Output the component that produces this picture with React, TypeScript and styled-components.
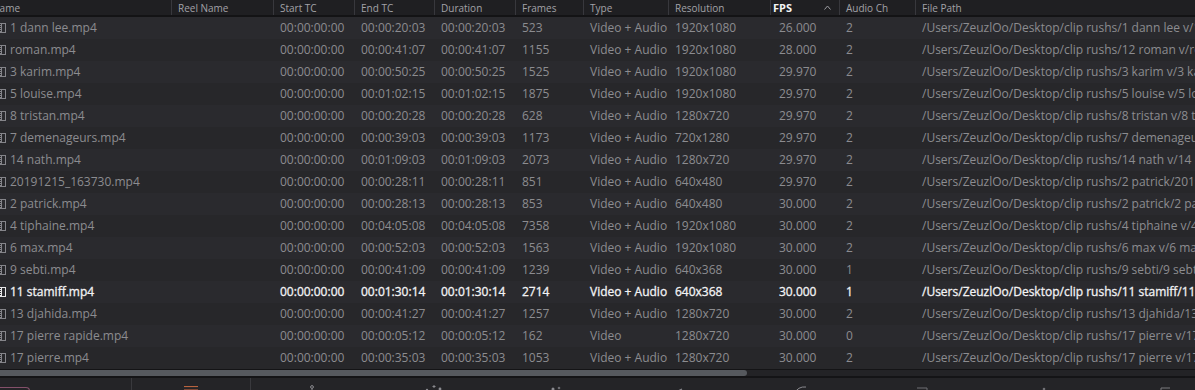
import React from 'react'
import styled, { createGlobalStyle } from 'styled-components'

const GlobalStyle = createGlobalStyle`
  html, body {
    margin: 0;
    padding: 0;
    background: #28282c;
    overflow: hidden;
  }
  body {
    font-family: "Open Sans", "Liberation Sans", sans-serif;
  }
`

// widths of the list columns, Name first, File Path last
const COLUMNS = '206px 102px 81px 80px 81px 68px 85px 102px 69px 76px 440px'

const Page = styled.div`
  width: 1195px;
  height: 390px;
  display: flex;
  flex-direction: column;
  overflow: hidden;
`

const TableViewport = styled.div`
  overflow: hidden;
  flex: none;
`

// the list is scrolled sideways, so the start of the Name column is out of view
const Table = styled.div`
  margin-left: -35px;
  width: max-content;
`

const HeaderRow = styled.div`
  display: grid;
  grid-template-columns: ${COLUMNS};
  height: 15px;
  background: #1f1f22;
  border-bottom: 2px solid #131315;
`

const HeaderCell = styled.div<{ $first?: boolean; $sorted?: boolean }>`
  display: flex;
  align-items: center;
  padding-left: ${({ $first, $sorted }) => ($first ? '7px' : $sorted ? '2px' : '6px')};
  border-left: ${({ $first }) => ($first ? 'none' : '1px solid #38383d')};
  color: ${({ $sorted }) => ($sorted ? '#f4f4f4' : '#a2a2a7')};
  font-size: ${({ $sorted }) => ($sorted ? '11px' : '10px')};
  font-weight: ${({ $sorted }) => ($sorted ? 700 : 400)};
  white-space: nowrap;
  overflow: hidden;
`

const SortArrow = styled.svg`
  margin-left: auto;
  margin-right: 8px;
  flex: none;
`

const Row = styled.div<{ $alt: boolean; $selected: boolean }>`
  display: grid;
  grid-template-columns: ${COLUMNS};
  height: 22px;
  background: ${({ $alt }) => ($alt ? '#2a2a2e' : '#27272a')};
  color: ${({ $selected }) => ($selected ? '#f2f2f4' : '#8c8c90')};
  -webkit-text-stroke: ${({ $selected }) => ($selected ? '0.3px #f2f2f4' : '0')};
  font-size: 12px;
`

const Cell = styled.div<{ $pad?: number }>`
  padding-left: ${({ $pad }) => $pad ?? 7}px;
  line-height: 22px;
  white-space: nowrap;
  overflow: hidden;
`

const NameCell = styled.div`
  display: flex;
  align-items: center;
  gap: 4px;
  padding-left: 34px;
  white-space: nowrap;
  overflow: hidden;
  line-height: 22px;
`

const ScrollTrack = styled.div`
  height: 6px;
  background: #232326;
  border-top: 1px solid #141416;
  border-bottom: 2px solid #141416;
  flex: none;
`

const ScrollThumb = styled.div`
  height: 100%;
  background: #56595e;
  border-radius: 0 3px 3px 0;
`

const PageBar = styled.div`
  display: flex;
  height: 40px;
  background: #242427;
  flex: none;
`

const BarSlot = styled.div<{ $width: number; $divider?: boolean }>`
  width: ${({ $width }) => $width}px;
  flex: none;
  display: flex;
  justify-content: center;
  border-right: ${({ $divider }) => ($divider ? '1px solid #39393d' : 'none')};
  box-sizing: border-box;
`

const LeftSlot = styled(BarSlot)`
  justify-content: flex-start;
`

const PinkTab = styled.div`
  width: 30px;
  height: 24px;
  margin-top: 9px;
  border: 1px solid #84506a;
  border-left: none;
  border-radius: 0 4px 0 0;
  box-sizing: border-box;
`

const PageIcon = styled.svg<{ $top?: number }>`
  margin-top: ${({ $top }) => $top ?? 7}px;
  flex: none;
`

type Clip = {
  name: string
  end: string
  frames: string
  type: string
  res: string
  fps: string
  audio: string
  dir: string
}

const clips: Clip[] = [
  { name: '1 dann lee.mp4', end: '00:00:20:03', frames: '523', type: 'Video + Audio', res: '1920x1080', fps: '26.000', audio: '2', dir: '1 dann lee v' },
  { name: 'roman.mp4', end: '00:00:41:07', frames: '1155', type: 'Video + Audio', res: '1920x1080', fps: '28.000', audio: '2', dir: '12 roman v' },
  { name: '3 karim.mp4', end: '00:00:50:25', frames: '1525', type: 'Video + Audio', res: '1920x1080', fps: '29.970', audio: '2', dir: '3 karim v' },
  { name: '5 louise.mp4', end: '00:01:02:15', frames: '1875', type: 'Video + Audio', res: '1920x1080', fps: '29.970', audio: '2', dir: '5 louise v' },
  { name: '8 tristan.mp4', end: '00:00:20:28', frames: '628', type: 'Video + Audio', res: '1280x720', fps: '29.970', audio: '2', dir: '8 tristan v' },
  { name: '7 demenageurs.mp4', end: '00:00:39:03', frames: '1173', type: 'Video + Audio', res: '720x1280', fps: '29.970', audio: '2', dir: '7 demenageurs v' },
  { name: '14 nath.mp4', end: '00:01:09:03', frames: '2073', type: 'Video + Audio', res: '1280x720', fps: '29.970', audio: '2', dir: '14 nath v' },
  { name: '20191215_163730.mp4', end: '00:00:28:11', frames: '851', type: 'Video + Audio', res: '640x480', fps: '29.970', audio: '2', dir: '2 patrick' },
  { name: '2 patrick.mp4', end: '00:00:28:13', frames: '853', type: 'Video + Audio', res: '640x480', fps: '30.000', audio: '2', dir: '2 patrick' },
  { name: '4 tiphaine.mp4', end: '00:04:05:08', frames: '7358', type: 'Video + Audio', res: '1920x1080', fps: '30.000', audio: '2', dir: '4 tiphaine v' },
  { name: '6 max.mp4', end: '00:00:52:03', frames: '1563', type: 'Video + Audio', res: '1920x1080', fps: '30.000', audio: '2', dir: '6 max v' },
  { name: '9 sebti.mp4', end: '00:00:41:09', frames: '1239', type: 'Video + Audio', res: '640x368', fps: '30.000', audio: '1', dir: '9 sebti' },
  { name: '11 stamiff.mp4', end: '00:01:30:14', frames: '2714', type: 'Video + Audio', res: '640x368', fps: '30.000', audio: '1', dir: '11 stamiff' },
  { name: '13 djahida.mp4', end: '00:00:41:27', frames: '1257', type: 'Video + Audio', res: '1280x720', fps: '30.000', audio: '2', dir: '13 djahida' },
  { name: '17 pierre rapide.mp4', end: '00:00:05:12', frames: '162', type: 'Video', res: '1280x720', fps: '30.000', audio: '0', dir: '17 pierre v' },
  { name: '17 pierre.mp4', end: '00:00:35:03', frames: '1053', type: 'Video + Audio', res: '1280x720', fps: '30.000', audio: '2', dir: '17 pierre v' },
]

const SELECTED = '11 stamiff.mp4'

const ClipIcon = ({ color }: { color: string }) => (
  <svg width="7" height="10" viewBox="0 0 7 10" style={{ flex: 'none' }}>
    <rect x="0.5" y="0.5" width="6" height="9" fill="none" stroke={color} strokeWidth="1" />
    <line x1="2.5" y1="0.5" x2="2.5" y2="9.5" stroke={color} strokeWidth="1" />
    <line x1="0.5" y1="2.5" x2="2.5" y2="2.5" stroke={color} />
    <line x1="0.5" y1="4.5" x2="2.5" y2="4.5" stroke={color} />
    <line x1="0.5" y1="6.5" x2="2.5" y2="6.5" stroke={color} />
    <line x1="0.5" y1="8.5" x2="2.5" y2="8.5" stroke={color} />
  </svg>
)

const headers = ['Clip Name', 'Reel Name', 'Start TC', 'End TC', 'Duration', 'Frames', 'Type', 'Resolution', 'FPS', 'Audio Ch', 'File Path']

const iconStroke = '#8a8a8f'

// only the top edge of the page icons shows at the bottom of the window
const pageIcons = [
  <g key="cut">
    <circle cx="10" cy="2" r="1.4" fill="none" stroke={iconStroke} />
    <line x1="10" y1="3.5" x2="10" y2="8" stroke={iconStroke} />
  </g>,
  <g key="edit">
    <line x1="10" y1="0" x2="10" y2="3" stroke={iconStroke} />
    <line x1="8.5" y1="1.5" x2="11.5" y2="1.5" stroke={iconStroke} />
    <circle cx="3" cy="5" r="1.2" fill={iconStroke} />
    <circle cx="16" cy="4" r="1.4" fill={iconStroke} />
  </g>,
  <g key="fusion">
    <circle cx="7" cy="4" r="1.5" fill={iconStroke} />
    <circle cx="13" cy="3" r="1.3" fill="#6a6a6f" />
  </g>,
  <g key="color">
    <line x1="6" y1="8" x2="14" y2="4" stroke={iconStroke} strokeWidth="1.2" />
  </g>,
  <g key="fairlight">
    <path d="M4 9 Q8 1 16 2" fill="none" stroke={iconStroke} />
  </g>,
  <g key="deliver">
    <path d="M5 3 L15 3 L15 9" fill="none" stroke="#6f6f74" />
  </g>,
  <g key="more">
    <circle cx="10" cy="4" r="1.3" fill="#6f6f74" />
  </g>,
  <g key="settings">
    <path d="M5 8 L5 3 L14 3" fill="none" stroke="#7a7a7f" />
  </g>,
]

export default function App() {
  return (
    <>
      <GlobalStyle />
      <Page>
        <TableViewport>
          <Table>
            <HeaderRow>
              {headers.map((h, i) =>
                h === 'FPS' ? (
                  <HeaderCell key={h} $sorted>
                    {h}
                    <SortArrow width="7" height="5" viewBox="0 0 7 5">
                      <polyline points="0.5,4.5 3.5,1 6.5,4.5" fill="none" stroke="#9c9ca1" strokeWidth="1" />
                    </SortArrow>
                  </HeaderCell>
                ) : (
                  <HeaderCell key={h} $first={i === 0}>
                    {h}
                  </HeaderCell>
                )
              )}
            </HeaderRow>
            {clips.map((c, i) => {
              const selected = c.name === SELECTED
              return (
                <Row key={c.name} $alt={i % 2 === 0} $selected={selected}>
                  <NameCell>
                    <ClipIcon color={selected ? '#e6e6e8' : '#85858a'} />
                    {c.name}
                  </NameCell>
                  <Cell />
                  <Cell>00:00:00:00</Cell>
                  <Cell>{c.end}</Cell>
                  <Cell>{c.end}</Cell>
                  <Cell>{c.frames}</Cell>
                  <Cell>{c.type}</Cell>
                  <Cell>{c.res}</Cell>
                  <Cell $pad={9}>{c.fps}</Cell>
                  <Cell>{c.audio}</Cell>
                  <Cell>{`/Users/ZeuzlOo/Desktop/clip rushs/${c.dir}/${c.name}`}</Cell>
                </Row>
              )
            })}
          </Table>
        </TableViewport>
        <ScrollTrack>
          <ScrollThumb style={{ width: 747 }} />
        </ScrollTrack>
        <PageBar>
          <LeftSlot $width={132} $divider>
            <PinkTab />
          </LeftSlot>
          <BarSlot $width={119} $divider>
            <PageIcon width="16" height="14" viewBox="0 0 16 14" $top={8}>
              <line x1="1" y1="0.5" x2="15" y2="0.5" stroke="#b8633f" strokeWidth="1.2" />
              <line x1="1" y1="3.5" x2="15" y2="3.5" stroke="#7c4634" strokeWidth="1" />
            </PageIcon>
          </BarSlot>
          {pageIcons.map((icon, i) => (
            <BarSlot key={i} $width={122}>
              <PageIcon width="20" height="14" viewBox="0 0 20 14">
                {icon}
              </PageIcon>
            </BarSlot>
          ))}
        </PageBar>
      </Page>
    </>
  )
}
